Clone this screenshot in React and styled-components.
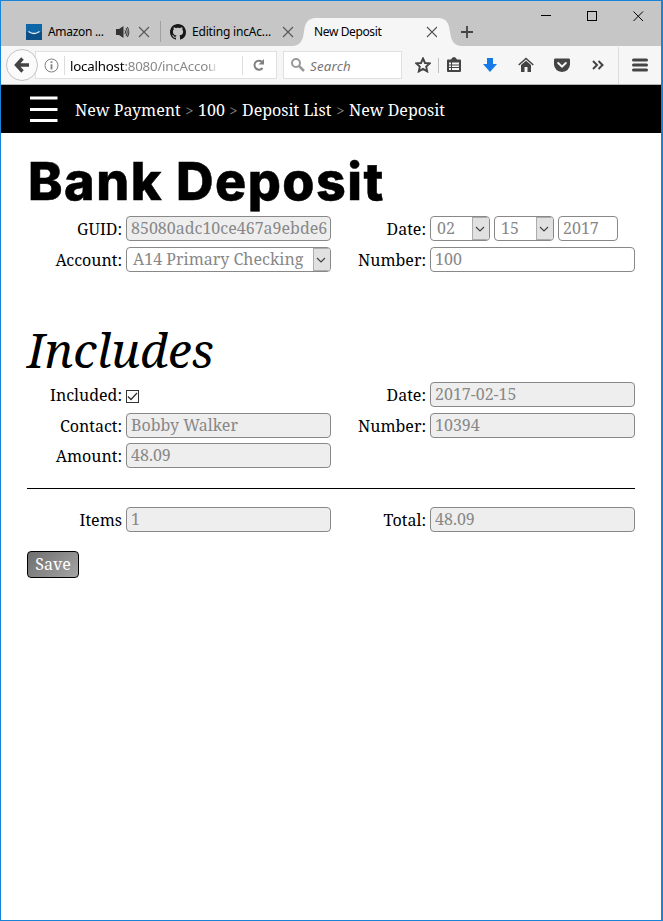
import React from "react";
import styled, { createGlobalStyle } from "styled-components";

const Global = createGlobalStyle`
  * { box-sizing: border-box; }
  body { margin: 0; background: #fff; }
`;

const serif = `"Noto Serif", "Droid Serif", "DejaVu Serif Condensed", "DejaVu Serif", serif`;
const sans = `"Segoe UI", "Noto Sans", "Open Sans", sans-serif`;

const Window = styled.div`
  width: 663px;
  height: 921px;
  border: 1px solid #1883d7;
  border-right-width: 2px;
  background: #fff;
  overflow: hidden;
  font-family: ${serif};
  font-size: 16px;
  color: #000;
`;

const Text = styled.span`
  white-space: pre;
  letter-spacing: ${(p) => p.$ls || 0}px;
`;

const TabStrip = styled.div`
  display: flex;
  height: 45px;
  background: #c6c6c6;
  align-items: flex-end;
  font: 12px/18px ${sans};
`;
const Tab = styled.div`
  display: flex;
  align-items: center;
  width: ${(p) => p.$w}px;
  height: 28px;
  padding-left: ${(p) => p.$pl || 0}px;
  background: ${(p) => (p.$active ? "#f6f6f6" : "transparent")};
  svg { flex: none; }
`;
const TabTitle = styled(Text)`
  width: ${(p) => p.$w}px;
  margin-left: ${(p) => p.$ml || 0}px;
  flex: none;
`;
const TabRule = styled.div`
  width: 1px;
  height: 21px;
  margin-bottom: 4px;
  background: #a0a0a0;
`;
const Edge = styled.svg`
  display: block;
  flex: none;
`;
const Controls = styled.div`
  display: flex;
  align-self: flex-start;
  margin: 10px 0 0 68px;
  gap: 35px;
`;
const NewTab = styled.div`
  height: 28px;
  padding: 7px 0 0;
  margin-left: -1px;
`;

const Toolbar = styled.div`
  display: flex;
  align-items: center;
  height: 39px;
  padding-left: 5px;
  background: #f6f6f6;
  border-bottom: 1px solid #b4b4b4;
  font: 13.3px/18px ${sans};
`;
const Back = styled.div`
  display: flex;
  align-items: center;
  justify-content: center;
  width: 32px;
  height: 32px;
  flex: none;
  border: 1px solid #c4c4c4;
  border-radius: 50%;
  background: #fbfbfb;
  z-index: 1;
`;
const Field = styled.div`
  display: flex;
  align-items: center;
  flex: none;
  width: ${(p) => p.$w}px;
  height: 28px;
  margin-left: ${(p) => p.$ml}px;
  padding-left: ${(p) => p.$pl}px;
  background: #fff;
  border: 1px solid #e0e0e0;
`;
const Rule = styled.div`
  width: 1px;
  flex: none;
  height: ${(p) => p.$h}px;
  margin: 0 ${(p) => p.$mr}px 0 ${(p) => p.$ml}px;
  background: ${(p) => p.$c || "#dcdcdc"};
`;
const Url = styled(Text)`
  width: 149px;
  margin-top: 1px;
  color: #888;
  b { font-weight: 400; color: #000; }
  mask-image: linear-gradient(90deg, #000 92%, transparent);
`;
const Placeholder = styled(Text)`
  font-style: italic;
  color: #757575;
  margin: 1px 0 0 5px;
`;
const ToolIcon = styled.svg`
  flex: none;
  display: block;
  margin-left: ${(p) => p.$ml || 0}px;
`;

const Crumbs = styled.nav`
  display: flex;
  align-items: center;
  height: 48px;
  padding-left: 29px;
  background: #000;
  color: #fff;
  line-height: 22px;
`;
const Trail = styled.div`
  display: flex;
  margin: 3px 0 0 17px;
`;
const Crumb = styled(Text)`
  width: ${(p) => p.$w}px;
`;
const Arrow = styled.span`
  width: 17px;
  text-align: center;
  color: #888;
  font: 15px/23px ${serif};
`;

const Page = styled.main`
  padding: 0 26px;
`;
const Title = styled.h1`
  margin: 0;
  padding: 17px 0 0 1px;
  height: 83px;
  font: 800 52px/64px Inter, sans-serif;
  white-space: nowrap;
  letter-spacing: 1.5px;
  -webkit-text-stroke: 0.5px #000;
`;
const Heading = styled.h2`
  margin: 44px 0 0;
  height: 66px;
  font: italic 400 48px/68px ${serif};
  white-space: nowrap;
`;
const Grid = styled.div`
  display: grid;
  grid-template-columns: 95px 205px 91px 205px;
  grid-template-rows: ${(p) => p.$rows};
  column-gap: 4px;
  row-gap: 6px;
  width: 608px;
`;
const Label = styled.label`
  text-align: right;
  line-height: 22px;
  padding-top: 2px;
  height: 24px;
  white-space: pre;
`;
const Box = styled.div`
  display: flex;
  width: ${(p) => p.$w || 205}px;
  height: 25px;
  padding-left: ${(p) => (p.$select ? 6 : 4)}px;
  border: 1px solid #888;
  border-radius: 4px;
  background: ${(p) => (p.$ro ? "#eee" : "#fff")};
  color: #888;
  line-height: 23px;
  overflow: hidden;
`;
const Clip = styled(Text)`
  flex: 1;
  min-width: 0;
  overflow: hidden;
  margin-right: ${(p) => p.$mr || 0}px;
`;
const Drop = styled.div`
  display: flex;
  align-items: center;
  justify-content: center;
  width: 18px;
  height: 23px;
  padding-right: 2px;
  margin-right: -1px;
  flex: none;
  background: #e1e1e1;
  border: 1px solid #adadad;
`;
const Dates = styled.div`
  display: flex;
  gap: 4px;
`;
const Check = styled.svg`
  margin-top: 8px;
`;
const Line = styled.hr`
  width: 608px;
  height: 1px;
  margin: 20px 0 18px;
  border: 0;
  background: #000;
`;
const Save = styled.button`
  display: block;
  width: 52px;
  height: 27px;
  margin-top: 19px;
  padding: 0 0 1px;
  border: 1px solid #000;
  border-radius: 4px;
  background: linear-gradient(135deg, #6e6e6e, #a5a5a5);
  color: #fff;
  font: 16px/22px ${serif};
`;

const CloseX = () => (
  <svg width="12" height="12" viewBox="0 0 12 12">
    <path d="M1 1L11 11M11 1L1 11" stroke="#555" strokeWidth="1.1" fill="none" />
  </svg>
);

const Select = ({ w, children }) => (
  <Box $w={w} $select>
    <Clip>{children}</Clip>
    <Drop>
      <svg width="10" height="6" viewBox="0 0 10 6">
        <path d="M1 1L5 5L9 1" stroke="#444" strokeWidth="1.2" fill="none" />
      </svg>
    </Drop>
  </Box>
);
const Input = ({ w, ro, children }) => (
  <Box $w={w} $ro={ro}>
    <Clip $mr={3}>{children}</Clip>
  </Box>
);

export default function App() {
  return (
    <>
      <Global />
      <Window>
        <TabStrip>
          <Tab $w={159} $pl={25}>
            <svg width="16" height="16" viewBox="0 0 16 16">
              <rect width="16" height="16" fill="#0b4f86" />
              <rect width="16" height="8" fill="#0d66a8" />
              <path d="M2.500 7.500Q8 11.500 13.500 7.500" stroke="#e8f4fb" strokeWidth="1.300" fill="none" />
            </svg>
            <TabTitle $ml={6} $w={67} $ls={-0.3}>Amazon ...</TabTitle>
            <svg width="16" height="14" viewBox="0 0 16 14">
              <path d="M1 4H4L8.500 1V13L4 10H1Z" fill="#333" />
              <path d="M9.800 5Q11.200 7 9.800 9M11 3Q13.400 7 11 11M12.300 2Q15.400 7 12.300 12" stroke="#444" strokeWidth="1.100" fill="none" />
            </svg>
            <Rule $ml={3} $mr={3} $h={1} $c="transparent" />
            <CloseX />
          </Tab>
          <TabRule />
          <Tab $w={131} $pl={9}>
            <svg width="16" height="16" viewBox="0 0 16 16">
              <path fill="#191717" d="M8 0C3.580 0 0 3.580 0 8c0 3.540 2.290 6.530 5.470 7.590.4.070.550-.170.550-.380 0-.190-.010-.820-.010-1.490-2.010.370-2.530-.490-2.690-.940-.090-.230-.480-.940-.820-1.130-.280-.150-.680-.520-.010-.530.630-.010 1.080.580 1.230.820.720 1.210 1.870.870 2.330.660.070-.520.280-.870.510-1.070-1.780-.2-3.640-.890-3.640-3.950 0-.870.310-1.590.820-2.150-.080-.2-.360-1.020.080-2.120 0 0 .670-.210 2.200.820.640-.180 1.320-.270 2-.270s1.360.090 2 .270c1.530-1.040 2.200-.820 2.200-.820.440 1.100.160 1.920.080 2.120.510.560.820 1.270.820 2.150 0 3.070-1.870 3.750-3.650 3.950.290.250.540.730.540 1.480 0 1.070-.010 1.930-.010 2.200 0 .210.150.460.550.380A8.010 8.010 0 0 0 16 8c0-4.420-3.580-8-8-8Z" />
            </svg>
            <TabTitle $ml={6} $w={90} $ls={-0.18}>Editing incAc...</TabTitle>
            <CloseX />
          </Tab>
          <Edge width="25" height="28" viewBox="0 0 25 28">
            <path d="M0 28C9 28 11 21 12 14S14 0 25 0V28Z" fill="#f6f6f6" />
          </Edge>
          <Tab $w={120} $active>
            <TabTitle $ml={-3} $w={112} $ls={-0.38}>New Deposit</TabTitle>
            <CloseX />
          </Tab>
          <Edge width="25" height="28" viewBox="0 0 25 28">
            <path d="M25 28C16 28 14 21 13 14S11 0 0 0V28Z" fill="#f6f6f6" />
          </Edge>
          <NewTab>
            <svg width="12" height="14" viewBox="0 0 12 14">
              <path d="M0 7H12M6 1V13" stroke="#444" strokeWidth="1.800" />
            </svg>
          </NewTab>
          <Controls>
            <svg width="11" height="11"><path d="M0 4.500H10" stroke="#000" /></svg>
            <svg width="11" height="11"><rect x=".5" y=".5" width="9" height="9" fill="none" stroke="#000" /></svg>
            <svg width="11" height="11"><path d="M.5 .5L10 10M10 .5L.5 10" stroke="#000" /></svg>
          </Controls>
        </TabStrip>
        <Toolbar>
          <Back>
            <svg width="16" height="16" viewBox="0 0 16 16">
              <path d="M8.500 1.500L2.500 8L8.500 14.500M3 8H15" stroke="#444" strokeWidth="3.400" fill="none" />
            </svg>
          </Back>
          <Field $w={242} $ml={-3} $pl={8}>
            <svg width="15" height="15" viewBox="0 0 15 15">
              <circle cx="7.500" cy="7.500" r="6.500" fill="none" stroke="#808080" />
              <path d="M7.500 6.300V11.500M7.500 3.200V5" stroke="#808080" strokeWidth="1.800" />
            </svg>
            <Rule $ml={5} $mr={5} $h={19} />
            <Url $ls={-0.2}><b>localhost</b>:8080/incAccou</Url>
            <Rule $ml={23} $mr={9} $h={19} />
            <svg width="14" height="14" viewBox="0 0 14 14">
              <path d="M10 3.800A4.500 4.500 0 1 0 10.500 10" stroke="#808080" strokeWidth="2" fill="none" />
              <path d="M12 1V6.500H6.500Z" fill="#808080" />
            </svg>
          </Field>
          <Field $w={119} $ml={6} $pl={7}>
            <svg width="14" height="14" viewBox="0 0 14 14">
              <circle cx="5" cy="5" r="4" fill="none" stroke="#999" strokeWidth="2" />
              <path d="M8 8L13 13" stroke="#999" strokeWidth="2.500" />
            </svg>
            <Placeholder $ls={0.2}>Search</Placeholder>
          </Field>
          <ToolIcon $ml={13} width="16" height="16" viewBox="0 0 16 16">
            <path d="M8 1.500L10 6L14.700 6.400L11.200 9.600L12.200 14.400L8 11.900L3.800 14.400L4.800 9.600L1.300 6.400L6 6Z" stroke="#444" strokeWidth="1.900" fill="none" />
          </ToolIcon>
          <Rule $ml={7} $mr={8} $h={15} $c="#c0c0c0" />
          <ToolIcon width="14" height="16" viewBox="0 0 14 16">
            <path d="M0 3.500Q0 2.500 1 2.500H4Q5 0 7 0T10 2.500H13Q14 2.500 14 3.500V14Q14 15 13 15H1Q0 15 0 14Z" fill="#444" />
            <path d="M2 5.500H12V13H2Z" fill="#f6f6f6" />
            <path d="M2 8H12M2 10.500H12M4.500 5V13" stroke="#444" />
          </ToolIcon>
          <ToolIcon $ml={22} width="14" height="16" viewBox="0 0 14 16">
            <path d="M4 1H10V7H14L7 15L0 7H4Z" fill="#147be8" />
          </ToolIcon>
          <ToolIcon $ml={21} width="16" height="16" viewBox="0 0 16 16">
            <path d="M.7 8L8 1.500L15.300 8" stroke="#444" strokeWidth="1.500" fill="none" />
            <path d="M3 8L8 3.800L13 8V15H9.500V10H6.500V15H3Z" fill="#444" />
          </ToolIcon>
          <ToolIcon $ml={20} width="16" height="16" viewBox="0 0 16 16">
            <path d="M1 1.500H15Q16 1.500 16 3V7.500Q15.500 14 8 15Q.5 14 0 7.500V3Q0 1.500 1 1.500Z" fill="#444" />
            <path d="M4.200 6L8 9.700L11.800 6" stroke="#f6f6f6" strokeWidth="2" fill="none" strokeLinecap="round" />
          </ToolIcon>
          <ToolIcon $ml={22} width="12" height="16" viewBox="0 0 12 16">
            <path d="M1 4L5 8L1 12M6.500 4L10.500 8L6.500 12" stroke="#444" strokeWidth="2" fill="none" />
          </ToolIcon>
          <Rule $ml={14} $mr={13} $h={37} />
          <ToolIcon width="16" height="14" viewBox="0 0 16 14">
            <path d="M1.500 2H14.500M1.500 7H14.500M1.500 12H14.500" stroke="#444" strokeWidth="3" strokeLinecap="round" />
          </ToolIcon>
        </Toolbar>
        <Crumbs>
          <svg width="28" height="26" viewBox="0 0 28 26">
            <path d="M0 2H27.500M0 13.500H27.500M0 24.500H27.500" stroke="#fff" strokeWidth="3" />
          </svg>
          <Trail>
            <Crumb $w={106}>New Payment</Crumb>
            <Arrow>&gt;</Arrow>
            <Crumb $w={27}>100</Crumb>
            <Arrow>&gt;</Arrow>
            <Crumb $w={90}>Deposit List</Crumb>
            <Arrow>&gt;</Arrow>
            <Crumb>New Deposit</Crumb>
          </Trail>
        </Crumbs>
        <Page>
          <Title>Bank Deposit</Title>
          <Grid>
            <Label>GUID:</Label>
            <Input ro>85080adc10ce467a9ebde6</Input>
            <Label>Date:</Label>
            <Dates>
              <Select w={60}>02</Select>
              <Select w={60}>15</Select>
              <Input w={60}>2017</Input>
            </Dates>
            <Label>Account:</Label>
            <Select>A14 Primary Checking</Select>
            <Label>Number:</Label>
            <Input>100</Input>
          </Grid>
          <Heading>Includes</Heading>
          <Grid $rows="25px 24px 25px">
            <Label>Included:</Label>
            <Check width="13" height="13" viewBox="0 0 13 13">
              <rect x=".5" y=".5" width="12" height="12" fill="#fff" stroke="#333" />
              <path d="M2 6.500L5 9.500L11 3" stroke="#333" strokeWidth="1.300" fill="none" />
            </Check>
            <Label>Date:</Label>
            <Input ro>2017-02-15</Input>
            <Label>Contact:</Label>
            <Input ro>Bobby Walker</Input>
            <Label>Number:</Label>
            <Input ro>10394</Input>
            <Label>Amount:</Label>
            <Input ro>48.09</Input>
          </Grid>
          <Line />
          <Grid>
            <Label>Items</Label>
            <Input ro>1</Input>
            <Label>Total:</Label>
            <Input ro>48.09</Input>
          </Grid>
          <Save>Save</Save>
        </Page>
      </Window>
    </>
  );
}
